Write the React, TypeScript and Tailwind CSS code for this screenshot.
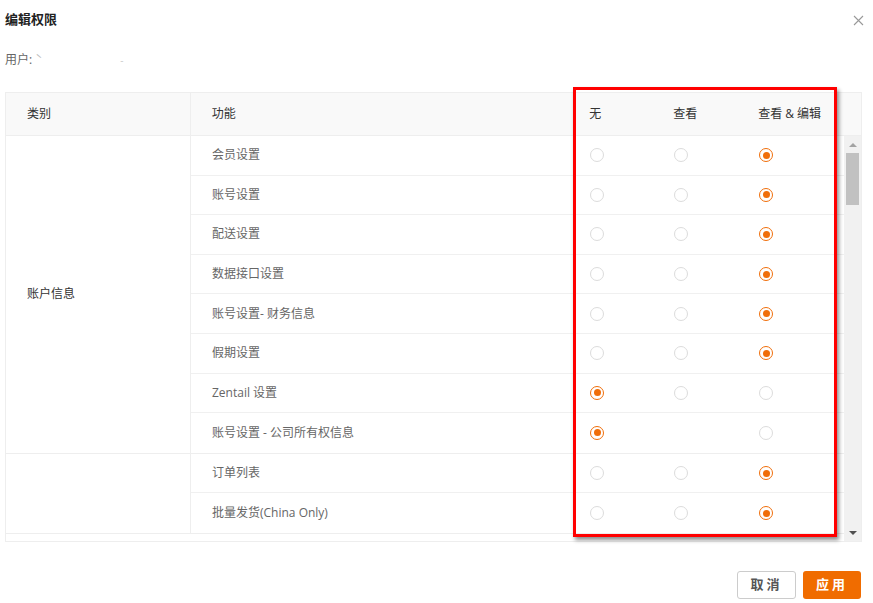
import React from "react";

type Row = { name: string; sel: (0 | 1 | 2)[] };

// 0 = unchecked, 1 = checked, 2 = no radio
const groups: { label: string; rows: Row[] }[] = [
  {
    label: "账户信息",
    rows: [
      { name: "会员设置", sel: [0, 0, 1] },
      { name: "账号设置", sel: [0, 0, 1] },
      { name: "配送设置", sel: [0, 0, 1] },
      { name: "数据接口设置", sel: [0, 0, 1] },
      { name: "账号设置- 财务信息", sel: [0, 0, 1] },
      { name: "假期设置", sel: [0, 0, 1] },
      { name: "Zentail 设置", sel: [1, 0, 0] },
      { name: "账号设置 - 公司所有权信息", sel: [1, 2, 0] },
    ],
  },
  {
    label: "",
    rows: [
      { name: "订单列表", sel: [0, 0, 1] },
      { name: "批量发货(China Only)", sel: [0, 0, 1] },
    ],
  },
];

const colW = ["w-[84px]", "w-[85px]", "w-[108px]"];

function Radio({ state }: { state: 0 | 1 | 2 }) {
  if (state === 2) return null;
  if (state === 1)
    return (
      <span className="flex h-[14px] w-[14px] items-center justify-center rounded-full border border-[#f06e0a] bg-white">
        <span className="h-[7px] w-[7px] rounded-full bg-[#f06e0a]" />
      </span>
    );
  return <span className="block h-[14px] w-[14px] rounded-full border border-[#dcdcdc] bg-white" />;
}

export default function App() {
  return (
    <div
      className="relative h-[603px] w-[873px] overflow-hidden bg-white text-[12px]"
      style={{ fontFamily: '"Open Sans", "Noto Sans CJK SC", sans-serif' }}
    >
      <div className="flex h-[40px] items-center justify-between pl-[5px] pr-[9px]">
        <h2 className="text-[13px] font-bold text-[#222]">编辑权限</h2>
        <svg width="11" height="11" viewBox="0 0 11 11" className="text-[#999]">
          <path d="M1 1L10 10M10 1L1 10" stroke="currentColor" strokeWidth="1.1" />
        </svg>
      </div>

      <div className="mt-[12px] flex h-[16px] items-center pl-[5px] text-[#666]">
        <span>用户:</span>
        <span className="ml-[3px] text-[#bbb]">ˋ</span>
        <span className="ml-[78px] text-[10px] text-[#ccc]">-</span>
      </div>

      <div className="ml-[5px] mt-[24px] w-[857px] border border-[#eee]">
        <div className="flex h-[43px] border-b border-[#eee] bg-[#f9f9f9] text-[#333]">
          <div className="flex w-[185px] items-center border-r border-[#eee] pl-[21px]">类别</div>
          <div className="flex w-[377px] items-center pl-[21px]">功能</div>
          <div className="flex w-[84px] items-center pl-[22px]">无</div>
          <div className="flex w-[85px] items-center pl-[22px]">查看</div>
          <div className="flex w-[108px] items-center pl-[22px]">查看 &amp; 编辑</div>
          <div className="w-[17px]" />
        </div>

        <div className="flex h-[405px]">
          <div className="w-[838px] overflow-hidden">
            {groups.map((g, gi) => (
              <div key={gi} className="flex border-b border-[#eee]">
                <div className="flex w-[185px] shrink-0 items-center border-r border-[#eee] pl-[21px] text-[#333]">
                  {g.label}
                </div>
                <div className="flex-1">
                  {g.rows.map((r, ri) => (
                    <div
                      key={ri}
                      className={`flex h-[39.6px] items-center text-[#666] ${
                        ri < g.rows.length - 1 ? "border-b border-[#f0f0f0]" : ""
                      }`}
                    >
                      <div className="w-[377px] pl-[21px]">{r.name}</div>
                      {r.sel.map((s, si) => (
                        <div key={si} className={`${colW[si]} flex items-center pl-[22px]`}>
                          <Radio state={s} />
                        </div>
                      ))}
                    </div>
                  ))}
                </div>
              </div>
            ))}
          </div>
          <div className="flex w-[17px] flex-col items-center bg-[#f1f1f1]">
            <div className="flex h-[17px] items-center justify-center">
              <span className="h-0 w-0 border-x-[4px] border-b-[4px] border-x-transparent border-b-[#a3a3a3]" />
            </div>
            <div className="h-[52px] w-[13px] bg-[#c1c1c1]" />
            <div className="flex-1" />
            <div className="flex h-[17px] items-center justify-center">
              <span className="h-0 w-0 border-x-[4px] border-t-[4px] border-x-transparent border-t-[#505050]" />
            </div>
          </div>
        </div>
      </div>

      <div className="mt-[29px] flex justify-end gap-[7px] pr-[12px]">
        <button className="h-[28px] w-[59px] rounded-[3px] border border-[#ccc] bg-white text-[13px] font-bold tracking-[3px] text-[#555]">
          取消
        </button>
        <button className="h-[28px] w-[58px] rounded-[3px] bg-[#f06c00] text-[13px] font-bold tracking-[3px] text-white">
          应用
        </button>
      </div>

      <div className="pointer-events-none absolute left-[573px] top-[87px] h-[450px] w-[264px] border-[3px] border-[#ff0000] shadow-[2px_3px_4px_rgba(0,0,0,0.45)]" />
    </div>
  );
}
